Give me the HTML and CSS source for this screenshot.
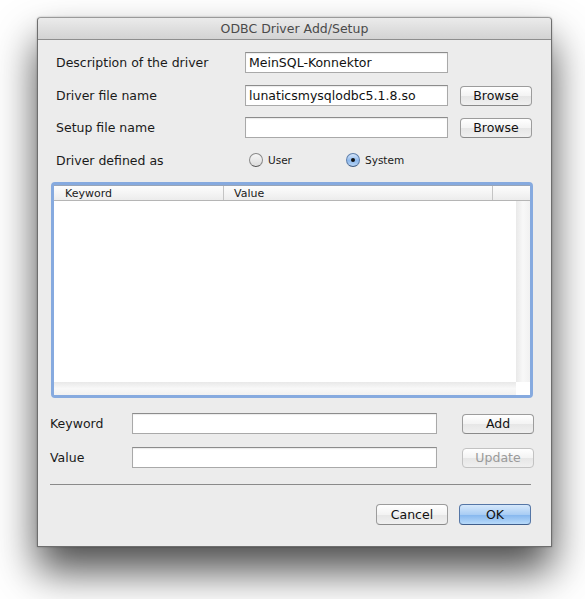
FILE: index.html
```html
<!DOCTYPE html>
<html>
<head>
<meta charset="utf-8">
<title>ODBC Driver Add/Setup</title>
<link rel="stylesheet" href="styles.css">
</head>
<body>
<div class="window">
  <div class="titlebar">ODBC Driver Add/Setup</div>
  <div class="content">
    <div class="row r1">
      <span class="label">Description of the driver</span>
      <div class="field">MeinSQL-Konnektor</div>
    </div>
    <div class="row r2">
      <span class="label">Driver file name</span>
      <div class="field">lunaticsmysqlodbc5.1.8.so</div>
      <div class="btn browse">Browse</div>
    </div>
    <div class="row r3">
      <span class="label">Setup file name</span>
      <div class="field"></div>
      <div class="btn browse">Browse</div>
    </div>
    <div class="row r4">
      <span class="label">Driver defined as</span>
      <span class="radio-item user"><span class="radio"></span>User</span>
      <span class="radio-item"><span class="radio on"><span class="dot"></span></span>System</span>
    </div>
    <div class="table-ring">
      <div class="table">
        <div class="thead">
          <div class="th c1">Keyword</div>
          <div class="th c2">Value</div>
          <div class="th c3"></div>
        </div>
        <div class="tbody">
          <div class="rows"></div>
          <div class="vscroll"></div>
        </div>
        <div class="hrow">
          <div class="hscroll"></div>
          <div class="corner"></div>
        </div>
      </div>
    </div>
    <div class="row k1">
      <span class="label2">Keyword</span>
      <div class="field wide"></div>
      <div class="btn act">Add</div>
    </div>
    <div class="row k2">
      <span class="label2">Value</span>
      <div class="field wide"></div>
      <div class="btn act disabled">Update</div>
    </div>
    <div class="sep"></div>
    <div class="footer">
      <div class="btn fbtn">Cancel</div>
      <div class="btn fbtn ok">OK</div>
    </div>
  </div>
</div>
</body>
</html>
```
FILE: styles.css
```css
html, body {
  margin: 0;
  padding: 0;
  background: #ffffff;
}
body {
  width: 585px;
  height: 599px;
  overflow: hidden;
  font-family: "Lucida Grande", "DejaVu Sans", sans-serif;
  font-size: 12.5px;
  color: #1a1a1a;
}
.window {
  margin-left: 37px;
  margin-top: 17px;
  width: 513px;
  height: 528px;
  border: 1px solid #6e6e6e;
  border-top-color: #9a9a9a;
  border-radius: 4px 4px 0 0;
  background: #ececec;
  box-shadow: 0 24px 42px rgba(0, 0, 0, 0.7), 0 0 2px rgba(0,0,0,0.3);
}
.titlebar {
  height: 21px;
  border-bottom: 1px solid #8e8e8e;
  border-radius: 4px 4px 0 0;
  background: linear-gradient(#ebebeb, #d3d3d3);
  text-align: center;
  line-height: 22px;
  font-size: 12.5px;
  color: #4a4a4a;
}
.content {
  display: flex;
  flex-direction: column;
}
.row {
  display: flex;
  align-items: center;
  height: 21px;
}
.r1 { margin-top: 12px; }
.r2 { margin-top: 12px; }
.r3 { margin-top: 11px; }
.r4 { margin-top: 12px; height: 20px; }
.label {
  margin-left: 18px;
  width: 189px;
  flex: none;
}
.field {
  box-sizing: border-box;
  width: 203px;
  height: 21px;
  background: #fff;
  border: 1px solid #a9a9a9;
  border-top-color: #8c8c8c;
  box-shadow: inset 0 1px 1px rgba(0,0,0,0.08);
  padding-left: 3px;
  line-height: 19px;
  font-size: 12.5px;
  color: #111;
  flex: none;
}
.btn {
  box-sizing: border-box;
  width: 72px;
  height: 20px;
  border: 1px solid #9c9c9c;
  border-bottom-color: #8a8a8a;
  border-radius: 4px;
  background: linear-gradient(#ffffff 0%, #f3f3f3 50%, #e6e6e6 51%, #f0f0f0 100%);
  text-align: center;
  line-height: 18px;
  font-size: 12.5px;
  color: #111;
  flex: none;
}
.browse { margin-left: 12px; }
.radio-item {
  display: flex;
  align-items: center;
  font-size: 10.5px;
}
.radio-item.user {
  margin-left: 4px;
  width: 97px;
}
.radio {
  box-sizing: border-box;
  width: 14px;
  height: 14px;
  border-radius: 50%;
  border: 1px solid #8a8a8a;
  border-bottom-color: #5a5a5a;
  background: linear-gradient(#f6f6f6, #dcdcdc);
  margin-right: 5px;
  display: flex;
  align-items: center;
  justify-content: center;
}
.radio.on {
  border-color: #5e7fab;
  border-bottom-color: #3d5a80;
  background: linear-gradient(#d7e7fa, #8db8ec 55%, #b8d5f6);
}
.dot {
  width: 4px;
  height: 4px;
  border-radius: 50%;
  background: #111;
}
.table-ring {
  margin-top: 12px;
  margin-left: 13px;
  width: 482px;
  height: 216px;
  box-sizing: border-box;
  border: 3px solid #86aadf;
  border-radius: 4px;
  background: #fff;
}
.table {
  display: flex;
  flex-direction: column;
  height: 100%;
  border-top: 1px solid #9aa6b8;
  box-sizing: border-box;
}
.thead {
  display: flex;
  height: 14px;
  border-bottom: 1px solid #b5b5b5;
  background: linear-gradient(#fdfdfd, #ececec);
  font-size: 11px;
  line-height: 15px;
  color: #1a1a1a;
}
.th { box-sizing: border-box; }
.c1 { width: 170px; padding-left: 11px; border-right: 1px solid #c4c4c4; }
.c2 { width: 269px; padding-left: 10px; border-right: 1px solid #c4c4c4; }
.c3 { flex: 1; }
.tbody {
  flex: 1;
  display: flex;
}
.rows { flex: 1; background: #fff; }
.vscroll {
  width: 14px;
  background: linear-gradient(90deg, #e9e9e9, #f8f8f8 50%, #f1f1f1);
}
.hrow {
  display: flex;
  height: 13px;
}
.hscroll {
  flex: 1;
  background: linear-gradient(#e8e8e8, #f8f8f8 50%, #f1f1f1);
}
.corner { width: 14px; background: #fff; }
.k1 { margin-top: 15px; }
.k2 { margin-top: 13px; }
.label2 {
  margin-left: 12px;
  width: 82px;
  flex: none;
}
.field.wide { width: 305px; }
.act { margin-left: 25px; }
.disabled {
  color: #9a9a9a;
  border-color: #c2c2c2;
}
.sep {
  margin-top: 16px;
  margin-left: 12px;
  width: 481px;
  height: 1px;
  background: #8a8a8a;
}
.footer {
  display: flex;
  justify-content: flex-end;
  gap: 11px;
  margin-top: 19px;
  margin-right: 20px;
}
.fbtn { height: 21px; line-height: 19px; }
.ok {
  border-color: #5576a6;
  border-bottom-color: #3f5e8c;
  background: linear-gradient(#d6e8fb 0%, #a9cdf4 50%, #84b6ee 51%, #b8dafa 100%);
}
```
